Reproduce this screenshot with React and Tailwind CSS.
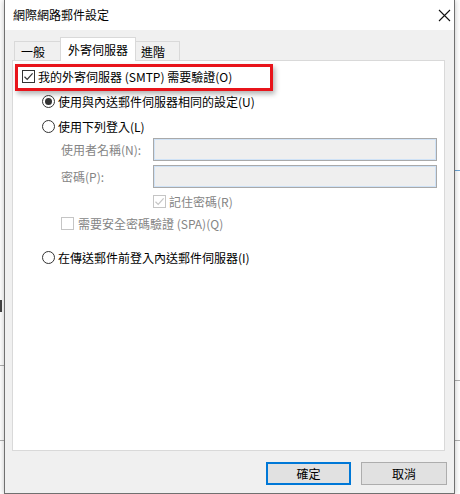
import React from "react";

const font = { fontFamily: '"Noto Sans CJK TC", "Noto Sans", sans-serif' };

function CheckBox({ checked, disabled }) {
  return (
    <div
      className={`w-[13px] h-[13px] border flex items-center justify-center shrink-0 bg-white ${
        disabled ? "border-[#c5c5c5]" : "border-[#333333]"
      }`}
    >
      {checked && (
        <svg width="11" height="11" viewBox="0 0 11 11">
          <path
            d="M1.5 5.8 L4.2 8.4 L9.6 2.4"
            fill="none"
            stroke={disabled ? "#c5c5c5" : "#333333"}
            strokeWidth="1.2"
          />
        </svg>
      )}
    </div>
  );
}

function Radio({ checked }) {
  return (
    <div className="w-[13px] h-[13px] rounded-full border border-[#333333] bg-white flex items-center justify-center shrink-0">
      {checked && <div className="w-[7px] h-[7px] rounded-full bg-[#333333]" />}
    </div>
  );
}

export default function App() {
  return (
    <div
      className="w-[460px] h-[494px] bg-white relative overflow-hidden text-[12px] leading-none text-black"
      style={font}
    >
      {/* background window fragments */}
      <div className="absolute left-0 top-[365px] w-[4px] h-px bg-[#b0b0b0]" />
      <div className="absolute left-0 top-[440px] w-[4px] h-px bg-[#b0b0b0]" />
      <div className="absolute left-0 top-[300px] w-[2px] h-[12px] bg-[#444]" />
      <div className="absolute right-0 top-[170px] w-[5px] h-px bg-[#6ea7d8]" />
      <div className="absolute right-0 top-[380px] w-[5px] h-px bg-[#b0b0b0]" />
      <div className="absolute right-0 top-[440px] w-[5px] h-px bg-[#b0b0b0]" />

      {/* dialog window */}
      <div className="absolute left-[4px] top-0 w-[451px] h-[494px] border border-t-0 border-[#707070] flex flex-col bg-[#f0f0f0] shadow-[0_0_6px_rgba(0,0,0,0.25)]">
        {/* title bar */}
        <div className="h-[30px] bg-white flex items-center justify-between pl-[8px] pr-[3px] shrink-0">
          <span className="text-[12px] text-black">網際網路郵件設定</span>
          <div className="w-[14px] h-[14px] flex items-center justify-center">
            <svg width="13" height="13" viewBox="0 0 13 13">
              <path d="M1 1 L12 12 M12 1 L1 12" stroke="#111" strokeWidth="1.1" fill="none" />
            </svg>
          </div>
        </div>

        {/* body */}
        <div className="flex-1 flex flex-col pt-[7px]">
          {/* tabs */}
          <div className="flex items-end h-[23px] ml-[9px] relative z-10">
            <div className="w-[47px] h-[19px] border border-b-0 border-[#d9d9d9] bg-[#f0f0f0] pl-[6px] pt-[4px] text-[#000]">
              一般
            </div>
            <div className="w-[76px] h-[24px] -ml-px -mb-px border border-b-0 border-[#d9d9d9] bg-white pl-[7px] pt-[6px]">
              外寄伺服器
            </div>
            <div className="w-[45px] h-[19px] -ml-px border border-b-0 border-[#d9d9d9] bg-[#f0f0f0] pl-[5px] pt-[4px]">
              進階
            </div>
          </div>

          {/* panel */}
          <div className="ml-[7px] w-[433px] h-[391px] border border-[#d9d9d9] bg-white relative">
            {/* red highlight */}
            <div className="absolute left-[2px] top-[3px] w-[258px] h-[27px] border-[3px] border-[#e8141b] shadow-[2px_3px_5px_rgba(0,0,0,0.3)]" />

            <div className="flex flex-col pl-[9px] pt-[9px]">
              <div className="flex items-center h-[13px] gap-[3px]">
                <CheckBox checked />
                <span>我的外寄伺服器 (SMTP) 需要驗證(O)</span>
              </div>

              <div className="flex items-center h-[13px] gap-[3px] mt-[12px] ml-[20px]">
                <Radio checked />
                <span>使用與內送郵件伺服器相同的設定(U)</span>
              </div>

              <div className="flex items-center h-[13px] gap-[3px] mt-[12px] ml-[20px]">
                <Radio />
                <span>使用下列登入(L)</span>
              </div>

              <div className="flex items-center mt-[5px] ml-[39px] h-[23px]">
                <span className="w-[92px] text-[#858585]">使用者名稱(N):</span>
                <div className="w-[284px] h-[23px] border border-[#a9a9a9] bg-[#efefef] shadow-[inset_0_0_0_1px_#cfe2f6]" />
              </div>

              <div className="flex items-center mt-[4px] ml-[39px] h-[23px]">
                <span className="w-[92px] text-[#858585]">密碼(P):</span>
                <div className="w-[284px] h-[23px] border border-[#a9a9a9] bg-[#efefef] shadow-[inset_0_0_0_1px_#cfe2f6]" />
              </div>

              <div className="flex items-center h-[13px] gap-[3px] mt-[7px] ml-[131px] text-[#858585]">
                <CheckBox checked disabled />
                <span>記住密碼(R)</span>
              </div>

              <div className="flex items-center h-[13px] gap-[4px] mt-[9px] ml-[39px] text-[#858585]">
                <CheckBox disabled />
                <span>需要安全密碼驗證 (SPA)(Q)</span>
              </div>

              <div className="flex items-center h-[13px] gap-[3px] mt-[21px] ml-[20px]">
                <Radio />
                <span>在傳送郵件前登入內送郵件伺服器(I)</span>
              </div>
            </div>
          </div>

          {/* buttons */}
          <div className="flex justify-end gap-[10px] mr-[7px] mt-[11px]">
            <div className="w-[85px] h-[23px] border-2 border-[#0078d7] bg-[#e1e1e1] flex items-center justify-center">
              確定
            </div>
            <div className="w-[86px] h-[23px] border border-[#adadad] bg-[#e1e1e1] flex items-center justify-center">
              取消
            </div>
          </div>
        </div>
      </div>
    </div>
  );
}
